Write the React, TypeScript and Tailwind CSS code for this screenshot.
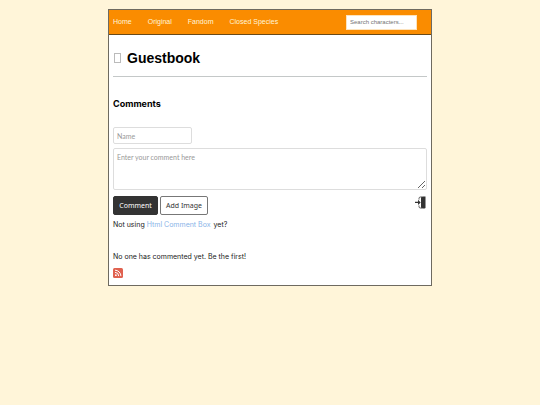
const navLinks = ["Home", "Original", "Fandom", "Closed Species"];

function LoginIcon() {
  return (
    <svg viewBox="0 0 12 13" className="h-[13px] w-3" aria-hidden="true">
      <path
        d="M4 3.5V2.5Q4 1 5.5 1H7M4 9.5V10.5Q4 12 5.5 12H7"
        fill="none"
        stroke="#555555"
        strokeWidth="1"
      />
      <path d="M6 1.5L7.5 0.5H10.5V12L9.5 12.5H7.5L6 11.5Z" fill="#333333" />
      <path d="M0 5.8H3V3.8L5.7 6.4L3 9V7H0Z" fill="#333333" />
    </svg>
  );
}

function RssIcon() {
  return (
    <svg viewBox="0 0 10 10" className="size-[10px]" aria-hidden="true">
      <rect width="10" height="10" rx="1.5" fill="#e0614f" />
      <circle cx="2.9" cy="7.2" r="0.9" fill="#ffffff" />
      <path
        d="M2 4.4A3.7 3.7 0 0 1 5.7 8.1M2 2.2A5.9 5.9 0 0 1 7.9 8.1"
        fill="none"
        stroke="#ffffff"
        strokeWidth="1"
      />
    </svg>
  );
}

function NavBar() {
  return (
    <nav className="flex h-[25px] items-center justify-between border-b border-[#6b4a17] bg-[#fa8c00] pr-[14px] pl-1 font-['Liberation_Sans',sans-serif]">
      <div className="flex gap-4">
        {navLinks.map((label) => (
          <a key={label} href="#" className="text-[7px] text-[#fff5d9]">
            {label}
          </a>
        ))}
      </div>
      <input
        type="search"
        aria-label="Search characters"
        placeholder="Search characters..."
        className="h-[15px] w-[71px] border border-[#fde3bd] bg-white px-[3px] text-[6px] placeholder:text-[#757575]"
      />
    </nav>
  );
}

function CommentForm() {
  return (
    <form
      className="mt-[18px] font-['Noto_Sans',sans-serif] text-[7px]"
      onSubmit={(e) => e.preventDefault()}
    >
      <input
        type="text"
        aria-label="Name"
        placeholder="Name"
        className="block h-[17px] w-[79px] rounded-xs border border-[#dddddd] px-[3px] font-[Lato,sans-serif] placeholder:text-[#999999]"
      />
      <textarea
        aria-label="Comment"
        placeholder="Enter your comment here"
        className="mt-1 block h-[42px] w-full resize rounded-xs border border-[#dddddd] px-[3px] py-[3px] font-[Lato,sans-serif] leading-[10px] placeholder:text-[#999999]"
      />
      <div className="mt-[6px] flex items-start justify-between">
        <div className="flex gap-[2px]">
          <button
            type="submit"
            className="h-[19px] w-[45px] rounded-xs border border-[#333333] bg-[#333333] text-white"
          >
            Comment
          </button>
          <button
            type="button"
            className="h-[19px] w-12 rounded-xs border border-[#777777] bg-white text-[#333333]"
          >
            Add Image
          </button>
        </div>
        <button type="button" aria-label="Log in">
          <LoginIcon />
        </button>
      </div>
    </form>
  );
}

export default function App() {
  return (
    <div className="min-h-screen bg-[#fff5d9] pt-[9px] font-[Inter,sans-serif] text-[7px] leading-[10px] text-[#222222]">
      <div className="mx-auto w-3/5 border border-[#6e6a60] bg-white">
        <NavBar />
        <main className="px-1 pb-[7px]">
          <header className="mt-[14px] flex h-[18px] items-center gap-[6px] font-['Liberation_Sans',sans-serif]">
            <span className="ml-px h-[10px] w-[7px] border border-[#bbbbbb]" />
            <h1 className="text-sm font-bold text-black">Guestbook</h1>
          </header>
          <hr className="mt-[9px] border-[#c4c8c8]" />

          <h2 className="mt-[22px] text-[9px] font-bold text-black">
            Comments
          </h2>
          <CommentForm />

          <p className="mt-[5px]">
            Not using{" "}
            <a href="#" className="mr-px text-[#8ab4e8]">
              Html Comment Box
            </a>{" "}
            yet?
          </p>
          <p className="mt-[22px]">No one has commented yet. Be the first!</p>
          <a href="#" aria-label="RSS feed" className="mt-[6px] block w-fit">
            <RssIcon />
          </a>
        </main>
      </div>
    </div>
  );
}
